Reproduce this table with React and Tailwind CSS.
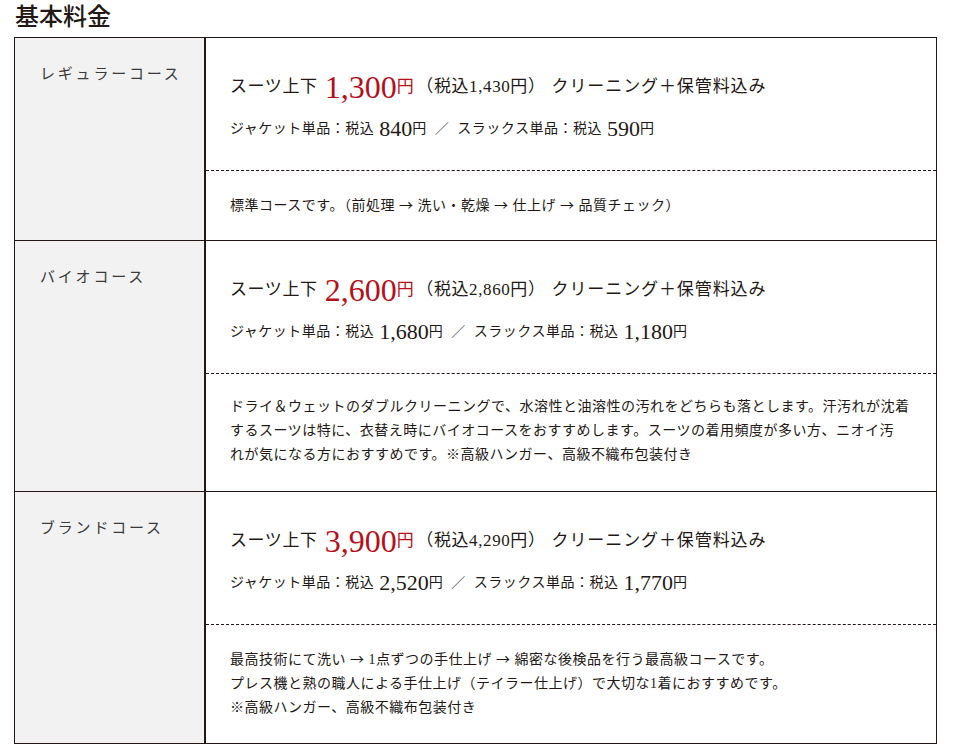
const ff = "font-['Liberation_Serif','Noto_Sans_CJK_JP',serif]";

const rows = [
  {
    name: "レギュラーコース",
    price: "1,300",
    tax: "1,430",
    jacket: "840",
    slacks: "590",
    lowerH: "h-[69px]",
    desc: ["標準コースです。（前処理 → 洗い・乾燥 → 仕上げ → 品質チェック）"],
  },
  {
    name: "バイオコース",
    price: "2,600",
    tax: "2,860",
    jacket: "1,680",
    slacks: "1,180",
    lowerH: "h-[117px]",
    desc: [
      "ドライ＆ウェットのダブルクリーニングで、水溶性と油溶性の汚れをどちらも落とします。汗汚れが沈着",
      "するスーツは特に、衣替え時にバイオコースをおすすめします。スーツの着用頻度が多い方、ニオイ汚",
      "れが気になる方におすすめです。※高級ハンガー、高級不織布包装付き",
    ],
  },
  {
    name: "ブランドコース",
    price: "3,900",
    tax: "4,290",
    jacket: "2,520",
    slacks: "1,770",
    lowerH: "h-[118px]",
    desc: [
      "最高技術にて洗い → 1点ずつの手仕上げ → 綿密な後検品を行う最高級コースです。",
      "プレス機と熟の職人による手仕上げ（テイラー仕上げ）で大切な1着におすすめです。",
      "※高級ハンガー、高級不織布包装付き",
    ],
  },
];

function Desc({ text }) {
  const parts = text.split("→");
  const out = [];
  parts.forEach((p, i) => {
    out.push(<span key={"p" + i}>{p}</span>);
    if (i < parts.length - 1)
      out.push(
        <span key={"a" + i} className="font-['Noto_Sans_CJK_JP',sans-serif]">
          →
        </span>
      );
  });
  return <div className="whitespace-nowrap">{out}</div>;
}

function Row({ r, last }) {
  return (
    <div className={`flex ${last ? "" : "border-b border-[#231815]"}`}>
      <div className="w-[189px] shrink-0 bg-[#f2f2f2] pl-[25px] pt-[24px]">
        <div className="text-[15px] leading-[24px] tracking-[2.8px] text-[#3a3a3a]">{r.name}</div>
      </div>
      <div className="flex-1 border-l-2 border-[#231815] bg-white">
        <div className="h-[133px] border-b border-dashed border-[#231815] pl-[24px] pt-[29px]">
          <div className="flex h-[40px] items-center whitespace-nowrap text-[17px] tracking-[0.6px] text-[#231815]">
            <span>スーツ上下</span>
            <span className="ml-[7px] text-[32px] leading-[40px] tracking-normal text-[#b5101a]">{r.price}</span>
            <span className="text-[17px] text-[#b5101a]">円</span>
            <span className="ml-[2px]">（税込{r.tax}円）</span>
            <span className="ml-[6px] tracking-[0.9px]">クリーニング＋保管料込み</span>
          </div>
          <div className="mt-[6px] flex h-[30px] items-center whitespace-nowrap text-[14px] tracking-[0.5px] text-[#231815]">
            <span>ジャケット単品：税込</span>
            <span className="ml-[5px] text-[22px] tracking-normal">{r.jacket}</span>
            <span>円</span>
            <span className="mx-[8px] text-[#555]">／</span>
            <span>スラックス単品：税込</span>
            <span className="ml-[5px] text-[22px] tracking-normal">{r.slacks}</span>
            <span>円</span>
          </div>
        </div>
        <div className={`${r.lowerH} pl-[24px] pt-[21px] text-[14px] leading-[24px] tracking-[0.5px] text-[#231815]`}>
          {r.desc.map((d, i) => (
            <Desc key={i} text={d} />
          ))}
        </div>
      </div>
    </div>
  );
}

export default function App() {
  return (
    <div className={`${ff} min-h-[756px] w-[954px] bg-white`}>
      <div className="ml-[14px] w-[923px]">
        <div className="pl-[1px] text-[24px] font-medium leading-[34px] text-[#231815]">基本料金</div>
        <div className="mt-[3px] border border-[#231815]">
          {rows.map((r, i) => (
            <Row key={i} r={r} last={i === rows.length - 1} />
          ))}
        </div>
      </div>
    </div>
  );
}
